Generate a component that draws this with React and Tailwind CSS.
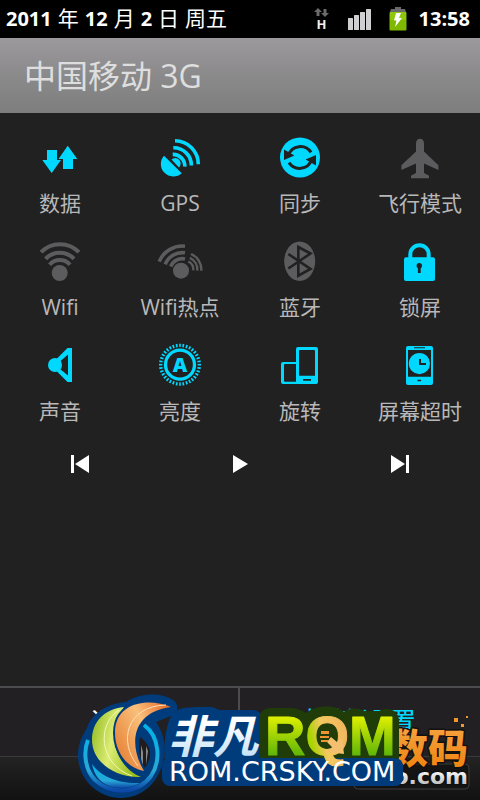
import React, { useState } from 'react';

const DARK = '#212121';

const icons = {
  data: (
    <path fill="currentColor" d="M9 13h10v10h4L13.700 36 4.300 23H9zM25 32V22h-4.500l9.200-13.300L39.300 22H35v10z" />
  ),
  gps: (
    <g fill="none" stroke="currentColor" strokeWidth="3.600">
      <path fill="currentColor" stroke="none" d="M6 18.700A12.500 12.500 0 0 0 23.700 36.300z" />
      <path fill="currentColor" stroke="none" d="M13.500 22.600A5.400 5.400 0 1 1 21 30.400z" />
      <path d="M17 3.700A23.400 23.400 0 0 1 40.300 27.300" />
      <path d="M15.300 10.800A17.600 17.600 0 0 1 33.400 28.600" />
      <path d="M14.700 17.400A11.800 11.800 0 0 1 26.800 29.600" />
    </g>
  ),
  sync: (
    <g>
      <circle cx="22" cy="20.500" r="20" fill="currentColor" />
      <g fill={DARK}>
        <path d="M6 12.600V23l10.400-4.400z" />
        <path d="M38 28.400V18l-10.400 4.400z" />
      </g>
      <g fill="none" stroke={DARK} strokeWidth="3">
        <path d="M10.500 18A12.600 12.600 0 0 1 33 15.400" />
        <path d="M33.500 23A12.600 12.600 0 0 1 11 25.600" />
      </g>
    </g>
  ),
  plane: (
    <path
      fill="currentColor"
      d="M22 1.800c2.400 0 4 2 4 4.800v8l14.400 13.600V33L26 26.400V36l5 2.800v2.400H13v-2.400l5-2.800v-9.600L3.400 33v-4.800L18 14.600V6.600c0-2.800 1.600-4.800 4-4.800z"
    />
  ),
  wifi: (
    <g fill="none" stroke="currentColor" strokeWidth="4">
      <circle cx="21.700" cy="32" r="8" fill="currentColor" stroke="none" />
      <path d="M3 11.200A26.500 26.500 0 0 1 41 11.200" />
      <path d="M7.600 17.800A19.500 19.500 0 0 1 36 17.800" />
      <path d="M11.600 23.800A13.400 13.400 0 0 1 32 23.800" />
    </g>
  ),
  hotspot: (
    <g fill="none" stroke="currentColor" strokeWidth="3.600">
      <circle cx="23" cy="29.700" r="8" fill="currentColor" stroke="none" />
      <path d="M1.200 20.700A25 25 0 0 1 27 5.200" />
      <path d="M7.200 23.400A18.500 18.500 0 0 1 27 11.800" />
      <path d="M12.700 25.500A12.400 12.400 0 0 1 27 18" />
      <g strokeWidth="2.400">
        <path d="M33 13A17 17 0 0 1 43.300 29.700" />
        <path d="M31.800 16.800A13 13 0 0 1 39.300 29.700" />
        <path d="M30.300 20.500A9 9 0 0 1 35.300 29.300" />
      </g>
    </g>
  ),
  bluetooth: (
    <g>
      <ellipse cx="21.700" cy="20.300" rx="15.500" ry="19.700" fill="currentColor" />
      <path
        fill="none"
        stroke={DARK}
        strokeWidth="2.600"
        d="M10.300 13L32.500 28 20.300 34.700V6L32.500 12.500 10.300 27.500"
      />
    </g>
  ),
  lock: (
    <g>
      <rect x="6" y="16.300" width="31" height="23.700" rx="2" fill="currentColor" />
      <path fill="none" stroke="currentColor" strokeWidth="4" d="M12.300 18v-4.600a9.200 9.200 0 0 1 18.400 0V18" />
      <circle cx="21.300" cy="24.800" r="2.700" fill={DARK} />
      <path fill={DARK} d="M19.900 25h2.800v7h-2.800z" />
    </g>
  ),
  sound: (
    <g fill="currentColor">
      <circle cx="17" cy="20" r="7" />
      <path fillRule="evenodd" d="M18 14.500L29.500 3H34v34h-4.500L18 25.500zM22 16.500v7.500l8 6.500v-21z" />
    </g>
  ),
  brightness: (
    <g>
      <circle cx="22" cy="19.700" r="14.500" fill="none" stroke="currentColor" strokeWidth="3.300" />
      <circle
        cx="22"
        cy="19.700"
        r="19.300"
        fill="none"
        stroke="currentColor"
        strokeWidth="3.400"
        pathLength="72"
        strokeDasharray="1 1"
        strokeDashoffset="0.500"
      />
      <text x="22" y="26.700" textAnchor="middle" fontSize="20" fontWeight="800" fill="currentColor">A</text>
    </g>
  ),
  rotate: (
    <path
      fill="currentColor"
      fillRule="evenodd"
      d="M20 2h18a2 2 0 0 1 2 2v33a2 2 0 0 1-2 2H5a2 2 0 0 1-2-2V19a2 2 0 0 1 2-2h13V4a2 2 0 0 1 2-2zM22 5a1 1 0 0 0-1 1v24.700h16V6a1 1 0 0 0-1-1zM7 19a1 1 0 0 0-1 1v15.700a1 1 0 0 0 1 1h11V19zM25 34v1.800h8V34z"
    />
  ),
  timeout: (
    <g>
      <path
        fill="currentColor"
        fillRule="evenodd"
        d="M10 1h23a2 2 0 0 1 2 2v35a2 2 0 0 1-2 2H10a2 2 0 0 1-2-2V3a2 2 0 0 1 2-2zM10 5v26.700h23V5zM16 2.200v1h11v-1zM19.500 34.700v1.600h3.600v-1.600z"
      />
      <circle cx="21.400" cy="18.600" r="10.600" fill="currentColor" />
      <path fill="none" stroke={DARK} strokeWidth="2" d="M22 14v5h6" />
    </g>
  ),
};

const initialToggles = [
  { id: 'data', label: '数据', on: true },
  { id: 'gps', label: 'GPS', on: true },
  { id: 'sync', label: '同步', on: true },
  { id: 'plane', label: '飞行模式', on: false },
  { id: 'wifi', label: 'Wifi', on: false },
  { id: 'hotspot', label: 'Wifi热点', on: false },
  { id: 'bluetooth', label: '蓝牙', on: false },
  { id: 'lock', label: '锁屏', on: true },
  { id: 'sound', label: '声音', on: true },
  { id: 'brightness', label: '亮度', on: true },
  { id: 'rotate', label: '旋转', on: true },
  { id: 'timeout', label: '屏幕超时', on: true },
];

const media = [
  { id: 'prev', name: '上一首', d: 'M1 1h3v18H1zM19 1v18L5 10z' },
  { id: 'play', name: '播放', d: 'M3 1v18l15-9z' },
  { id: 'next', name: '下一首', d: 'M1 1v18l14-9zM16 1h3v18h-3z' },
];

function StatusBar() {
  return (
    <div className="flex h-[38px] items-center justify-between bg-black pl-1.5 pr-2.5 text-[20px] font-bold text-white whitespace-nowrap">
      <div className="flex items-center gap-1.5">
        <span>2011</span>
        <span className="text-[21px] font-normal">年</span>
        <span>12</span>
        <span className="text-[21px] font-normal">月</span>
        <span>2</span>
        <span className="text-[21px] font-normal">日</span>
        <span className="text-[21px] font-normal">周五</span>
      </div>
      <div className="flex items-center">
        <svg width="16" height="26" viewBox="0 0 16 26" className="mr-[18px] overflow-visible">
          <path fill="#6b6b6b" d="M0 6l4-4 4 4H5.500v4h-3V6zM7 7h2.500V3h3v4H15l-4 4z" />
          <text x="7.500" y="23" textAnchor="middle" fontSize="13" fontWeight="700" fill="#f0f0f0">H</text>
        </svg>
        <svg width="24" height="24" viewBox="0 0 24 24" className="mr-[17px]" fill="#cfcfd1">
          <rect x="0" y="11" width="5" height="12" rx="0.500" />
          <rect x="6" y="8" width="5" height="15" rx="0.500" />
          <rect x="12" y="5" width="5" height="18" rx="0.500" />
          <rect x="18" y="2" width="5" height="21" rx="0.500" />
        </svg>
        <svg width="18" height="24" viewBox="0 0 18 24" className="mr-3">
          <path fill="#6a6a6a" d="M6 0h6v2h4l1 3H1l1-3h4z" />
          <rect x="0.500" y="5" width="17" height="18.500" rx="1" fill="#7fb800" />
          <path fill="#9fd61a" d="M1 5h16v8H1z" opacity="0.500" />
          <path fill="#fff" d="M7 6h5l-2 5h3L6 20l1.500-6.500H5z" />
        </svg>
        <span>13:58</span>
      </div>
    </div>
  );
}

function CrskyMark() {
  return (
    <svg
      viewBox="0 0 410 110"
      width="410"
      height="110"
      className="pointer-events-none absolute bottom-0 left-0"
      fontWeight="700"
      strokeLinejoin="round"
    >
      <defs>
        <linearGradient id="leaf" x1="0" x2="1" y1="0" y2="0.300">
          <stop offset="0" stopColor="#8cb81c" />
          <stop offset="0.500" stopColor="#dcec74" />
          <stop offset="1" stopColor="#9cc01c" />
        </linearGradient>
        <linearGradient id="flame" x1="0" x2="1" y1="0.600" y2="0">
          <stop offset="0" stopColor="#e8873c" />
          <stop offset="0.500" stopColor="#f9c07c" />
          <stop offset="1" stopColor="#e8601c" />
        </linearGradient>
        <linearGradient id="ring" x1="0" x2="0" y1="0" y2="1">
          <stop offset="0" stopColor="#00b4e8" />
          <stop offset="0.700" stopColor="#28a8d8" />
          <stop offset="1" stopColor="#0c48a8" />
        </linearGradient>
        <linearGradient id="ice" x1="0" x2="0" y1="0" y2="1">
          <stop offset="0.300" stopColor="#fff" />
          <stop offset="1" stopColor="#b4daf4" />
        </linearGradient>
        <linearGradient id="lime" gradientUnits="userSpaceOnUse" x1="0" x2="0" y1="24" y2="66">
          <stop offset="0" stopColor="#e8f400" />
          <stop offset="1" stopColor="#5cb408" />
        </linearGradient>
        <linearGradient id="gold" gradientUnits="userSpaceOnUse" x1="306" x2="350" y1="50" y2="40">
          <stop offset="0.100" stopColor="#a8d400" />
          <stop offset="0.400" stopColor="#f4c860" />
          <stop offset="1" stopColor="#f0b45c" />
        </linearGradient>
      </defs>

      {/* round emblem */}
      <path
        fill="#003c7c"
        d="M78 63C79 50 84 43 87 38 92 22 110 13 126 12 142 2 162 3 173 10 180 15 178 23 171 26L156 32C163 42 166 54 164 66 161 91 143 108 121 108 97 108 77 88 78 63z"
      />
      <path fill="#1e1c1d" d="M140 47c7 5 11 12 10 19-1 6-3 10-6 12-4-8-6-20-4-31z" />
      <path fill="#8a8a8c" d="M141 55l2 7v14l-2-7zM146 56l2 5-2 14z" />
      <path
        fill="none"
        stroke="url(#ring)"
        strokeWidth="4"
        d="M88 50C83 62 85 80 95 90 112 106 139 103 151 86 161 71 160 47 144 35"
      />
      <path fill="url(#ring)" d="M92 74c8 12 26 20 48 19-10 6-22 6-31 3-9-4-15-11-17-22z" />
      <g stroke="#003c7c" strokeWidth="4" paintOrder="stroke">
        <path fill="url(#leaf)" d="M124 17C104 19 92 32 92 50 92 72 115 88 141 87 118 78 104 46 124 17z" />
        <path fill="url(#flame)" d="M171 17C150 8 115 11 115 43 115 62 127 78 144 81 128 54 132 22 171 17z" />
      </g>
      <path fill="none" stroke="#f4f8b4" strokeWidth="1" d="M119 20C97 34 98 74 132 86" />
      <path fill="none" stroke="#fde0b8" strokeWidth="1" d="M166 15C126 16 118 52 138 76" />

      {/* plates behind the lettering */}
      <path fill="#003c7c" d="M172 25c6-9 18-7 24-8h14c6 0 8 4 12 3h30c8 0 12 6 12 12v44h-98c-4-12 0-44 6-51z" />
      <path
        fill="#203c08"
        d="M259 30c0-8 5-12 12-12h19c6 0 12 2 16 5 9-8 29-9 38-1 4-4 14-5 20-1h15c10-5 20 0 20 10v36c0 6-4 9-10 9H269c-7 0-10-5-10-10z"
      />
      <rect x="162" y="68" width="241" height="28" rx="8" fill="#003c7c" />

      <text x="168" y="63" fontSize="45" fontStyle="italic" fill="url(#ice)">非凡</text>
      <text
        x="265"
        y="65"
        fontSize="56"
        fontFamily="Liberation Sans, sans-serif"
        fill="url(#lime)"
        stroke="url(#lime)"
        strokeWidth="1"
      >
        R<tspan fill="url(#gold)" stroke="url(#gold)">Q</tspan>M
      </text>
      <path fill="#f4c070" d="M328 62l16 2-2-16-5 4-6-5-4 5 5 5z" />
      <path fill="#ee9430" d="M321 41h8v3h-8zM320 46h9v2h-9zM321 50h7v2h-7z" />
      <text x="169" y="91" fontSize="27" fontWeight="400" fontFamily="DejaVu Sans, sans-serif" fill="#fff">
        ROM.CRSKY.COM
      </text>
    </svg>
  );
}

function DigitalMark() {
  return (
    <svg
      viewBox="0 0 130 90"
      width="130"
      height="90"
      className="pointer-events-none absolute bottom-0 right-0"
      fontWeight="900"
    >
      <defs>
        <linearGradient id="amber" gradientUnits="userSpaceOnUse" x1="0" x2="0" y1="20" y2="58">
          <stop offset="0" stopColor="#f4a03c" />
          <stop offset="1" stopColor="#f08410" />
        </linearGradient>
        <linearGradient id="silver" gradientUnits="userSpaceOnUse" x1="0" x2="0" y1="60" y2="76">
          <stop offset="0" stopColor="#fff" />
          <stop offset="1" stopColor="#b8b8b8" />
        </linearGradient>
      </defs>
      <rect x="4" y="54" width="115" height="25" rx="4" fill="#141414" stroke="#3c3c3c" />
      <g fill="#f0982c">
        <path d="M104 8h4v4h-4zM111 14h3v3h-3zM116 6h2v2h-2z" />
      </g>
      <g stroke="#111" strokeWidth="3" strokeLinejoin="round" paintOrder="stroke">
        <text x="38" y="53" fontSize="40" fill="url(#amber)">数码</text>
        <text x="118" y="74" textAnchor="end" fontSize="22" fontFamily="DejaVu Sans, sans-serif" fill="url(#silver)">o.com</text>
      </g>
    </svg>
  );
}

export default function App() {
  const [toggles, setToggles] = useState(initialToggles);
  const [tab, setTab] = useState('settings');

  const flip = (id) => {
    setToggles(toggles.map((t) => (t.id === id ? { ...t, on: !t.on } : t)));
  };

  return (
    <div className="relative flex min-h-screen flex-col overflow-hidden bg-[#212121] font-['Open_Sans','Noto_Sans_CJK_SC',sans-serif]">
      <StatusBar />

      <h1 className="flex h-[75px] items-center bg-linear-to-b from-[#9c999c] via-[#8b8a8b] to-[#7e7e7e] px-6 text-[32px] text-[#dedede]">
        中国移动 3G
      </h1>

      <div className="grid grid-cols-4">
        {toggles.map((t) => (
          <button
            key={t.id}
            type="button"
            aria-pressed={t.on}
            onClick={() => flip(t.id)}
            className="flex flex-col items-center gap-2 pt-6"
          >
            <svg
              width="44"
              height="44"
              viewBox="0 0 44 44"
              className={t.on ? 'overflow-visible text-[#00d8ff]' : 'overflow-visible text-[#5c5b5d]'}
            >
              {icons[t.id]}
            </svg>
            <span className="text-[21px] leading-7 whitespace-nowrap text-[#b9b8b9]">{t.label}</span>
          </button>
        ))}
      </div>

      <div className="grid grid-cols-3">
        {media.map((m) => (
          <button key={m.id} type="button" aria-label={m.name} className="flex h-[78px] items-center justify-center">
            <svg width="20" height="20" viewBox="0 0 20 20" fill="#fff">
              <path d={m.d} />
            </svg>
          </button>
        ))}
      </div>

      <div className="mt-auto grid grid-cols-2 border-t-2 border-[#4c4b4d] bg-[#222022] text-[28px]">
        <button
          type="button"
          onClick={() => setTab('notice')}
          className={`h-[68px] border-r-2 border-[#4c4b4d] ${tab === 'notice' ? 'text-[#00d8ff]' : 'text-white'}`}
        >
          通知
        </button>
        <button
          type="button"
          onClick={() => setTab('settings')}
          className={tab === 'settings' ? 'text-[#00d8ff]' : 'text-white'}
        >
          快捷设置
        </button>
      </div>
      <div className="h-11 border-t border-[#3a393b] bg-linear-to-b from-[#242324] to-[#131213]" />

      <DigitalMark />
      <CrskyMark />
    </div>
  );
}
